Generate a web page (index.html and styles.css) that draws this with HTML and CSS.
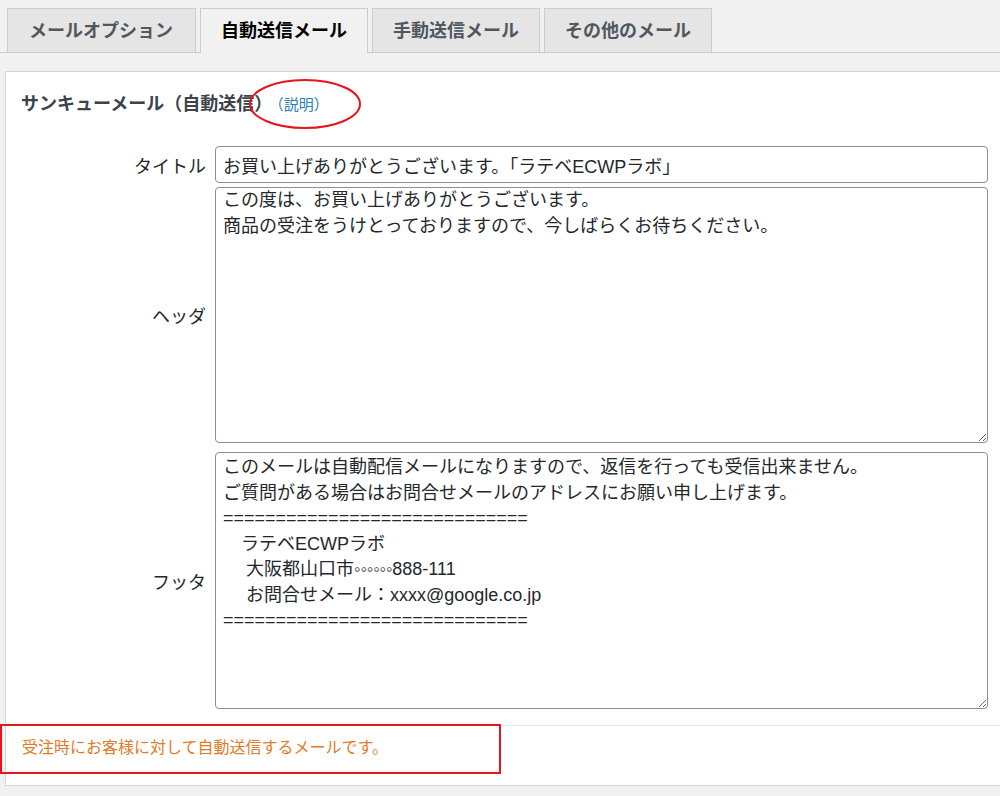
FILE: index.html
```html
<!DOCTYPE html>
<html lang="ja">
<head>
<meta charset="utf-8">
<title>メール設定</title>
<link rel="stylesheet" href="styles.css">
</head>
<body>
<nav class="tabs">
  <a class="tab tab-wide">メールオプション</a>
  <a class="tab tab-active">自動送信メール</a>
  <a class="tab">手動送信メール</a>
  <a class="tab">その他のメール</a>
</nav>
<section class="panel">
  <h2 class="panel-head">サンキューメール（自動送信）<a class="help">（説明）</a></h2>
  <form class="mail-form">
    <div class="row row-title">
      <label class="label">タイトル</label>
      <input class="field-input" type="text" value="お買い上げありがとうございます。「ラテベECWPラボ」">
    </div>
    <div class="row row-header">
      <label class="label">ヘッダ</label>
      <textarea class="field-area">この度は、お買い上げありがとうございます。
商品の受注をうけとっておりますので、今しばらくお待ちください。</textarea>
    </div>
    <div class="row row-footer">
      <label class="label">フッタ</label>
      <textarea class="field-area">このメールは自動配信メールになりますので、返信を行っても受信出来ません。
ご質問がある場合はお問合せメールのアドレスにお願い申し上げます。
=============================
　ラテベECWPラボ
　 大阪都山口市◦◦◦◦◦◦888-111
　 お問合せメール：xxxx@google.co.jp
=============================</textarea>
    </div>
  </form>
  <p class="panel-foot">受注時にお客様に対して自動送信するメールです。</p>
</section>
<svg class="mark-ellipse" width="114" height="52" viewBox="0 0 114 52"><ellipse cx="57" cy="26" rx="55" ry="24" fill="none" stroke="#e8141b" stroke-width="2"/></svg>
<div class="mark-rect"></div>
</body>
</html>
```
FILE: styles.css
```css
html, body {
  margin: 0;
  padding: 0;
}
body {
  background: #f1f1f1;
  font-family: "Liberation Sans", "Noto Sans CJK JP", sans-serif;
  color: #23282d;
  overflow: hidden;
  width: 1000px;
  height: 796px;
  position: relative;
}
.tabs {
  display: flex;
  gap: 4px;
  padding: 8px 0 0 7px;
  border-bottom: 1px solid #cccccc;
  height: 44px;
}
.tab {
  display: block;
  height: 44px;
  box-sizing: border-box;
  padding: 0 20px;
  border: 1px solid #cccccc;
  border-bottom: none;
  background: #e5e5e5;
  color: #50575e;
  font-size: 18px;
  font-weight: bold;
  line-height: 45px;
  white-space: nowrap;
}
.tab-wide {
  padding: 0 22px 0 21px;
}
.tab-active {
  background: #f1f1f1;
  color: #000000;
  height: 45px;
  margin-bottom: -1px;
}
.panel {
  margin: 18px 0 0 5px;
  width: 1010px;
  height: 715px;
  box-sizing: border-box;
  background: #ffffff;
  border: 1px solid #d5d5d5;
  display: flex;
  flex-direction: column;
}
.panel-head {
  margin: 0;
  padding: 20px 15px 0;
  font-size: 18px;
  line-height: 24px;
  font-weight: bold;
  color: #3c434a;
}
.help {
  font-size: 15px;
  font-weight: normal;
  color: #2e7fb0;
  margin-left: 4px;
}
.mail-form {
  margin-top: 29px;
  padding-bottom: 16px;
}
.row {
  display: grid;
  grid-template-columns: 200px 773px;
  column-gap: 9px;
  align-items: center;
}
.row-header {
  margin-top: 4px;
}
.row-footer {
  margin-top: 9px;
}
.label {
  text-align: right;
  font-size: 18px;
  color: #23282d;
}
.field-input,
.field-area {
  box-sizing: border-box;
  width: 773px;
  margin: 0;
  border: 1px solid #8c8f94;
  border-radius: 4px;
  background: #ffffff;
  font-family: "Liberation Sans", "Noto Sans CJK JP", sans-serif;
  font-size: 18px;
  color: #23282d;
  outline: none;
}
.field-input {
  height: 37px;
  padding: 0 7px;
  line-height: 35px;
}
.field-area {
  display: block;
  padding: 0 7px;
  line-height: 25.5px;
  resize: both;
  overflow: hidden;
}
.row-header .field-area {
  height: 256px;
}
.row-footer .field-area {
  height: 257px;
  padding-top: 2px;
}
.panel-foot {
  margin: 0;
  border-top: 1px solid #e5e5e5;
  padding: 10px 16px 0;
  flex: 1;
  font-size: 16px;
  line-height: 24px;
  color: #e07b2a;
}
.mark-ellipse {
  position: absolute;
  left: 248px;
  top: 78px;
}
.mark-rect {
  position: absolute;
  left: 0;
  top: 724px;
  width: 497px;
  height: 46px;
  border: 2px solid #e8141b;
}
```
